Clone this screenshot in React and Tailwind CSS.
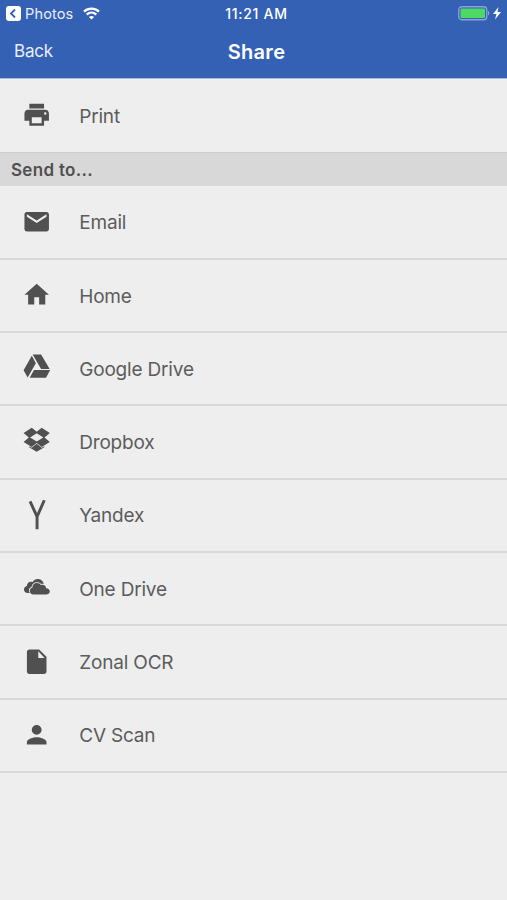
import React from "react";
import { MdPrint, MdEmail, MdHome, MdPerson } from "react-icons/md";

function GlyphIcon({ children, className = "" }) {
  return (
    <svg
      viewBox="0 0 24 24"
      fill="currentColor"
      className={`w-[29.4px] h-[29.4px] ${className}`}
    >
      {children}
    </svg>
  );
}

const DriveIcon = () => (
  <GlyphIcon className="-mt-[4px]">
    <path d="M8 3L1.3 15L4.6 20.8L11.3 9.1ZM9.8 14.7L6.3 21H19.6L23 14.7ZM22.6 13.9L15.6 2H8.7L15.6 13.9Z" />
  </GlyphIcon>
);

const DropboxIcon = () => (
  <GlyphIcon className="-mt-[3px]">
    <path
      fillRule="evenodd"
      d="M7.93 2.2L12 5.6L16.07 2.2L22.7 6.5L18.4 10.2L22.7 13.9L16.07 17.9L12 14.6L7.93 17.9L1.3 13.9L5.6 10.2L1.3 6.5ZM12 6.8L6.6 10.2L12 13.5L17.4 10.2Z"
    />
    <path d="M12 15.3L16.07 18.6L18.2 17.3V18.2L12 21.9L5.8 18.2V17.3L7.93 18.6Z" />
  </GlyphIcon>
);

const YandexIcon = () => (
  <GlyphIcon className="overflow-visible">
    <path
      d="M6.6 1.2L12.3 13.6V23.8M18.2 0.2L12.3 13.6"
      fill="none"
      stroke="currentColor"
      strokeWidth="2.4"
    />
  </GlyphIcon>
);

const OneDriveIcon = () => (
  <GlyphIcon className="-mt-[3px]">
    <path d="M6.4 17.1H4.6C2.8 17.1 1.6 15.9 1.6 14.3C1.6 12.8 2.6 11.6 4 11.4C4 9.3 5.4 7.9 7.2 7.9C7.8 7.9 8.2 8 8.7 8.2C9.6 6.6 11 5.7 12.9 5.7C15.5 5.7 17.4 7.4 17.8 9.6C16.9 9.5 16.3 9.6 15.7 9.9C14.8 8.8 13.6 8.3 12.2 8.3C9.8 8.3 8 10 7.8 12.2C6.6 12.5 5.7 13.4 5.7 14.9C5.7 15.8 5.9 16.5 6.4 17.1Z" />
    <path d="M9.3 18.3C7.6 18.3 6.4 17.1 6.4 15.5C6.4 14 7.3 13 8.5 12.8C8.4 10.5 10.2 8.9 12.2 8.9C13.7 8.9 14.8 9.6 15.4 10.7C17.5 9.7 19.6 11.1 19.7 13.2C21.5 13.2 22.7 14.3 22.7 15.8C22.7 17.3 21.7 18.3 20.2 18.3Z" />
  </GlyphIcon>
);

const FileIcon = () => (
  <GlyphIcon>
    <path d="M6 2C4.9 2 4 2.9 4 4V20C4 21.1 4.9 22 6 22H18C19.1 22 20 21.1 20 20V8L14 2ZM13.3 9V3.5L18.5 9Z" />
  </GlyphIcon>
);

const destinations = [
  { label: "Email", icon: <MdEmail size={29.4} /> },
  { label: "Home", icon: <MdHome size={29.4} /> },
  { label: "Google Drive", icon: <DriveIcon /> },
  { label: "Dropbox", icon: <DropboxIcon /> },
  { label: "Yandex", icon: <YandexIcon /> },
  { label: "One Drive", icon: <OneDriveIcon /> },
  { label: "Zonal OCR", icon: <FileIcon /> },
  { label: "CV Scan", icon: <MdPerson size={29.4} /> },
];

function Row({ icon, label, className = "" }) {
  return (
    <div className={`flex items-center ${className}`}>
      <div className="w-[74px] shrink-0 flex justify-center pb-px text-[#505050]">
        {icon}
      </div>
      <span className="ml-[5.2px] pt-0.5 text-[19px] leading-6 tracking-[-0.18px] text-[#5c5c5c]">
        {label}
      </span>
    </div>
  );
}

function StatusBar() {
  return (
    <div className="h-7 grid grid-cols-3 items-center pl-1.5 pr-[5px] text-white">
      <div className="flex items-center">
        <svg className="mb-px" width="15" height="15" viewBox="0 0 15 15">
          <rect width="15" height="15" rx="3" fill="white" />
          <path d="M9 3.5L5 7.5L9 11.5" fill="none" stroke="#3561b5" strokeWidth="1.8" />
        </svg>
        <span className="ml-1 text-[14.5px] leading-5 tracking-[0.15px] text-[#e9eefa]">
          Photos
        </span>
        <svg className="ml-2.5 mb-0.5" width="17" height="13" viewBox="0 0 17 13">
          <g fill="none" stroke="white" strokeWidth="2.3">
            <path d="M1 4.6C5.2 0.6 11.8 0.6 16 4.6" />
            <path d="M3.7 7.6C6.5 5 10.5 5 13.3 7.6" />
          </g>
          <path d="M5.9 9.9C7.4 8.6 9.6 8.6 11.1 9.9L8.5 12.5Z" fill="white" />
        </svg>
      </div>
      <span className="justify-self-center ml-[5px] text-[14px] leading-5 font-medium tracking-[0.7px] whitespace-nowrap">
        11:21 AM
      </span>
      <svg className="justify-self-end mb-px" width="44" height="15" viewBox="0 0 44 15">
        <rect x="0.75" y="0.75" width="28" height="13" rx="3" fill="none" stroke="#8ba4d6" strokeWidth="1.3" />
        <rect x="2.5" y="2.5" width="24.5" height="9.5" rx="1.2" fill="#4cd964" />
        <path d="M30 5C31.6 5.6 31.6 8.9 30 9.5Z" fill="#8ba4d6" />
        <path d="M40.5 1L35 8H38.5L37 13.5L43 6H39.5Z" fill="white" />
      </svg>
    </div>
  );
}

export default function App() {
  return (
    <div className="w-full h-[900px] overflow-hidden bg-[#eeeeee] font-['Inter',sans-serif]">
      <header className="h-[79px] bg-[#3561b5] border-b border-[#a9bddf] text-white">
        <StatusBar />
        <div className="h-[46px] grid grid-cols-3 items-center px-3.5">
          <span className="text-[17px] leading-6 tracking-[-0.2px] text-[#e9eefa]">Back</span>
          <span className="justify-self-center pt-px text-[20px] leading-6 font-semibold tracking-[0.3px] ml-[6px]">
            Share
          </span>
        </div>
      </header>

      <Row icon={<MdPrint size={29.4} />} label="Print" className="h-[73px]" />

      <div className="h-[34px] flex items-center bg-[#d8d8d8] border-t border-[#cccccc] pl-[11px] pt-0.5 text-[17px] tracking-[0.3px] font-semibold text-[#505050]">
        Send to...
      </div>

      {/* Share destinations */}
      <div className="pt-[0.6px]">
        {destinations.map((item) => (
          <Row
            key={item.label}
            icon={item.icon}
            label={item.label}
            className="h-[73.3px] border-b-2 border-[#d9d9d9]"
          />
        ))}
      </div>
    </div>
  );
}
